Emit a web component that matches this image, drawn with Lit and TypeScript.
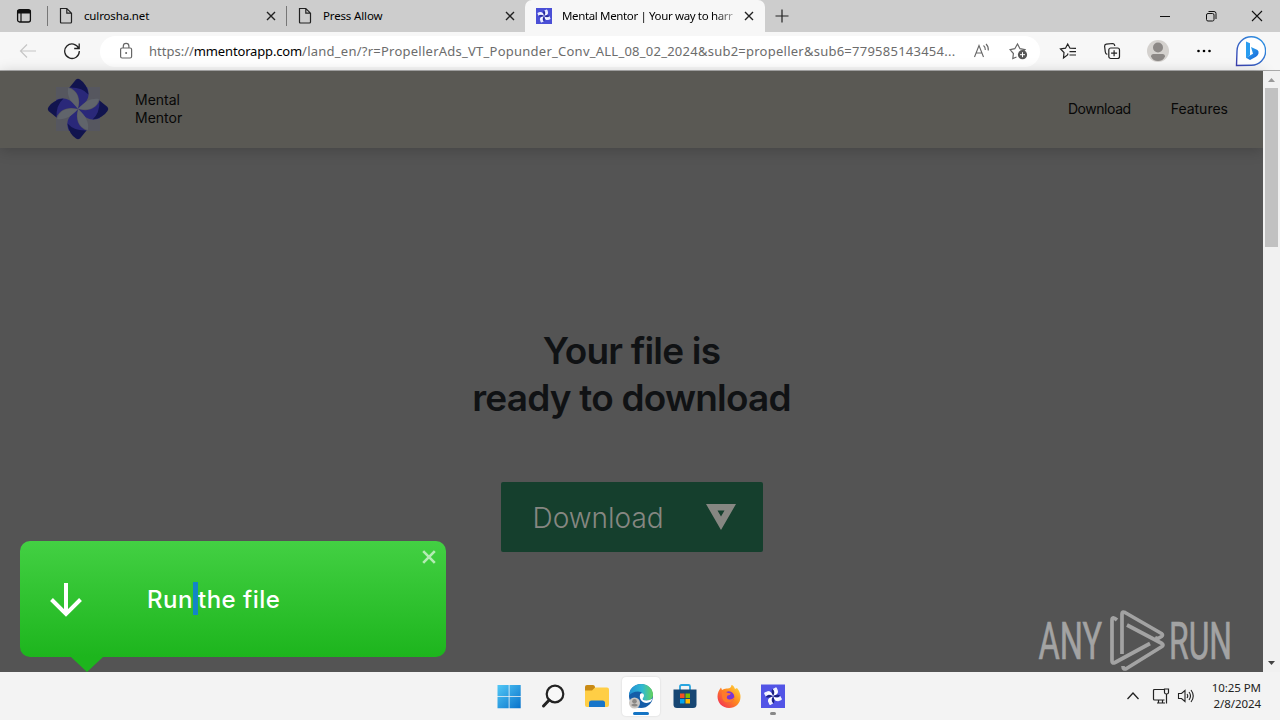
import { LitElement, html, css, svg } from "lit";
import { customElement } from "lit/decorators.js";

const pageIcon = html`<svg class="ic" width="14" height="18" viewBox="0 0 14 18"><path d="M1.5 1.5h6.3l4.700 4.700v8.800q0 1-1 1h-9q-1 0-1-1zM7.800 1.500v4.700h4.700" fill="none" stroke="#222" stroke-width="1.200"/></svg>`;
const closeIcon = html`<svg class="ic" width="12" height="12" viewBox="0 0 12 12"><path d="M2 2l8 8M10 2l-8 8" stroke="#222" stroke-width="1.400"/></svg>`;

const petals = [0, 90, 180, 270];

// Four-petal pinwheel drawn around the origin, one petal per quarter turn.
const wheel = (body: string, tip: string, shade: string) => svg`${petals.map(
  (a) => svg`<g transform="rotate(${a})">
    <path d="M0 0C-8-7-11-13-10-21Q3-18 0 0z" fill=${shade}/>
    <path d="M0 0C3-10 0-18-9-22L9-22C14-10 6-5 0 0z" fill=${body}/>
    <path d="M-8.500-21.500L-2-29.500Q0-31 2-29.500Q9-25 10.500-14.500Q4-22-8.500-21.500z" fill=${tip}/>
  </g>`
)}`;

@customElement("app-root")
export class AppRoot extends LitElement {
  static styles = css`
    :host { display: flex; flex-direction: column; width: 1280px; height: 720px; overflow: hidden; position: relative; font-family: "Noto Sans", "Open Sans", sans-serif; color: #111; }
    * { box-sizing: border-box; }
    svg { display: block; flex: none; }
    .tabs { height: 32px; background: #cdcdcd; display: flex; align-items: stretch; flex: none; }
    .cell { display: flex; align-items: center; justify-content: center; flex: none; }
    .actions { width: 47px; }
    .tab { display: flex; align-items: center; font-size: 11.5px; flex: none; white-space: nowrap; color: #000; }
    .tab .label { flex: 1; line-height: 20px; letter-spacing: -.15px; }
    .t1 { width: 238px; padding: 0 9px 0 11px; }
    .t1 .label, .t2 .label { margin-left: 11px; }
    .t2 { width: 238px; padding: 0 9px 0 11px; }
    .t3 { width: 240px; background: #f7f7f7; border-radius: 7px 7px 0 0; padding: 0 10px 0 11px; }
    .t3 .label { margin: 0 8px 0 10px; letter-spacing: -.36px; -webkit-mask-image: linear-gradient(90deg, #000 88%, rgba(0,0,0,.25)); mask-image: linear-gradient(90deg, #000 88%, rgba(0,0,0,.25)); }
    .sep { width: 1px; height: 20px; margin-top: 6px; background: #777; flex: none; }
    .plus { width: 34px; }
    .fill { flex: 1; }
    .w46 { width: 46px; }
    .bar { height: 39px; background: #f7f7f7; border-bottom: 1px solid #aaa; display: flex; align-items: center; padding: 0 6px; flex: none; }
    .w44 { width: 44px; }
    .w48 { width: 48px; }
    .pill { width: 940px; height: 31px; margin: 0 6px; background: #fff; border-radius: 16px; display: flex; align-items: center; padding: 0 12px 0 18px; flex: none; }
    .url { width: 815px; margin-left: 15px; font-size: 13px; line-height: 20px; color: #6c6c6c; white-space: nowrap; letter-spacing: .245px; }
    .url b { font-weight: 400; color: #000; letter-spacing: -.15px; }
    .url .scheme { letter-spacing: 0; }
    .pill .read { margin-left: 10px; }
    .pill .star { margin-left: 18px; }
    .view { flex: 1; display: flex; min-height: 0; }
    .site { width: 1263px; background: #545454; display: flex; flex-direction: column; font-family: "Inter", sans-serif; }
    .head { height: 77px; background: #5a5954; box-shadow: 0 2px 14px rgba(0,0,0,.2); display: flex; align-items: center; padding: 0 35px 2px 46px; font-size: 14px; line-height: 18px; color: #080808; flex: none; }
    .brand { margin-left: 25px; flex: 1; }
    .nav { display: flex; gap: 40px; }
    .nav .first { letter-spacing: -.45px; }
    .hero { display: flex; flex-direction: column; align-items: center; padding-top: 179px; }
    .title { margin: 0; font-size: 37px; line-height: 47px; font-weight: 600; letter-spacing: -.8px; color: #101214; text-align: center; white-space: nowrap; }
    .dl { width: 262px; height: 70px; margin-top: 61px; border-radius: 2px; background: #153f2d; display: flex; align-items: center; justify-content: space-between; padding: 2px 26px 0 32px; font-size: 28px; font-weight: 300; color: #868782; }
    .dl svg { margin-top: -2px; }
    .scroll { width: 17px; background: #f1f1f1; display: flex; flex-direction: column; align-items: center; }
    .thumb { width: 13px; height: 159px; background: #c1c1c1; }
    .arr { height: 17px; }
    .task { height: 48px; background: #f3f3f3; display: flex; align-items: center; flex: none; padding-left: 487px; }
    .app { width: 44px; height: 48px; flex: none; display: flex; flex-direction: column; align-items: center; padding-top: 11px; }
    .app.on { width: 38px; height: 39px; margin: 0 3px; padding-top: 6px; background: #fff; border-radius: 4px; box-shadow: 0 0 2px rgba(0,0,0,.15); }
    .line { width: 16px; height: 3px; border-radius: 2px; background: #1474c4; margin-top: 3px; flex: none; }
    .line.small { width: 6px; background: #888; }
    .tray { display: flex; align-items: center; padding-right: 19px; }
    .net { margin-left: 12px; }
    .vol { margin-left: 7px; }
    .clock { width: 66px; font-size: 11.5px; line-height: 16px; color: #222; text-align: right; white-space: nowrap; letter-spacing: -.05px; }
    .pop { position: absolute; left: 20px; top: 541px; width: 426px; height: 116px; border-radius: 10px; background: linear-gradient(#43d043, #1db51d); display: flex; align-items: center; padding-left: 30px; font-family: "Inter", sans-serif; }
    .down { margin-top: 2px; }
    .msg { margin-left: 65px; font-size: 24px; letter-spacing: .5px; line-height: 33px; font-weight: 500; color: #fff; white-space: pre; flex: 1; display: flex; }
    .sel { width: 5px; height: 33px; margin-top: -1px; background: #1385c7; }
    .x { align-self: flex-start; margin: 9px 10px 0 0; }
    .tail { position: absolute; left: 51px; top: 116px; }
    .mark { position: absolute; left: 1030px; top: 605px; font-family: "Roboto", sans-serif; }
  `;

  render() {
    return html`
      <div class="tabs">
        <div class="cell actions"><svg width="16" height="16" viewBox="0 0 16 16"><rect x="1.600" y="1.600" width="12.800" height="12.400" rx="2" fill="none" stroke="#111" stroke-width="1.300"/><path d="M1.500 2h13v3.500h-13z" fill="#111"/><path d="M5 5v9" stroke="#111" stroke-width="1.200"/></svg></div>
        <div class="sep"></div>
        <div class="tab t1">${pageIcon}<span class="label">culrosha.net</span>${closeIcon}</div>
        <div class="sep"></div>
        <div class="tab t2">${pageIcon}<span class="label">Press Allow</span>${closeIcon}</div>
        <div class="tab t3">
          <svg width="16" height="16" viewBox="-34 -34 68 68"><rect x="-34" y="-34" width="68" height="68" fill="#4a4fd6"/><g transform="rotate(25)">${wheel("#f4f6ff", "#e8ecff", "#262a9a")}</g></svg>
          <span class="label">Mental Mentor | Your way to harr</span>${closeIcon}
        </div>
        <div class="cell plus"><svg width="14" height="14" viewBox="0 0 14 14"><path d="M7 .5v13M.5 7h13" stroke="#222" stroke-width="1.200"/></svg></div>
        <div class="fill"></div>
        <div class="cell w46"><svg width="10" height="10" viewBox="0 0 10 10"><path d="M0 5.500h10" stroke="#111"/></svg></div>
        <div class="cell w46"><svg width="12" height="12" viewBox="0 0 12 12"><rect x="1.500" y="3.500" width="7.500" height="7.500" rx="1.500" fill="none" stroke="#111"/><path d="M3.500 1.500H9q2 0 2 2V9" fill="none" stroke="#111"/></svg></div>
        <div class="cell w46"><svg width="12" height="12" viewBox="0 0 12 12"><path d="M1 1l10 10M11 1L1 11" stroke="#111" stroke-width="1.100"/></svg></div>
      </div>

      <div class="bar">
        <div class="cell w44"><svg width="18" height="16" viewBox="0 0 18 16"><path d="M8 1.500L1.500 8 8 14.500M1.500 8H17" fill="none" stroke="#c6c6c6" stroke-width="1.200"/></svg></div>
        <div class="cell w44"><svg width="18" height="18" viewBox="0 0 18 18"><path d="M15.800 6.500A7.300 7.300 0 1 0 16.300 9M16.200 1.500v5h-5" fill="none" stroke="#222" stroke-width="1.300"/></svg></div>
        <div class="pill">
          <svg width="16" height="18" viewBox="0 0 16 18"><rect x="2.600" y="6" width="11" height="10" rx="1.500" fill="none" stroke="#666" stroke-width="1.200"/><path d="M5.300 6V4.200a2.800 2.800 0 0 1 5.600 0V6" fill="none" stroke="#666" stroke-width="1.200"/><circle cx="8.100" cy="11" r="1" fill="#666"/></svg>
          <div class="url"><span class="scheme">https://</span><b>mmentorapp.com</b>/land_en/?r=PropellerAds_VT_Popunder_Conv_ALL_08_02_2024&amp;sub2=propeller&amp;sub6=779585143454...</div>
          <svg class="read" width="18" height="16" viewBox="0 0 18 16"><path d="M1.500 14L6 2.500 10.500 14M3 10h6M10.500 2.500q2 1.500 1.800 4.500M13 1q2.700 2.500 2.300 6.500" fill="none" stroke="#666" stroke-width="1.100"/></svg>
          <svg class="star" width="19" height="18" viewBox="0 0 19 18"><path d="M7.500 15l-3.700 1.500.6-5L1 7.600l4.800-.9L8.500 2 11 6.700l5 .9-2 2" fill="none" stroke="#666" stroke-width="1.200"/><circle cx="13.500" cy="12.700" r="4.600" fill="#555"/><path d="M13.500 10.200v5M11 12.700h5" stroke="#fff"/></svg>
        </div>
        <div class="cell w44"><svg width="18" height="18" viewBox="0 0 18 18"><path d="M9 11.500l-.500 1.500-4 3 .5-5.500L1.500 7l5-.800L8.700 2l2.300 4.200 6 .2M10.500 9.700H17M10.500 13H17" fill="none" stroke="#222" stroke-width="1.200"/></svg></div>
        <div class="cell w44"><svg width="18" height="18" viewBox="0 0 18 18"><path d="M4.300 12.300Q2.500 12 2.300 10L1.600 4.200q0-1.700 1.700-2L9.500 1.500q2 0 2.300 2.500" fill="none" stroke="#222" stroke-width="1.200"/><rect x="5.800" y="6" width="10.700" height="10.500" rx="2" fill="#f7f7f7" stroke="#222" stroke-width="1.200"/><path d="M11.100 8.200v6M8.100 11.200h6" stroke="#222" stroke-width="1.200"/></svg></div>
        <div class="cell w48"><svg width="22" height="22" viewBox="0 0 22 22"><circle cx="11" cy="11" r="11" fill="#d4d1ce"/><circle cx="11" cy="7.500" r="5" fill="#8c8886"/><path d="M4 16.500q0-2.500 2.500-2.500h9q2.500 0 2.500 2.500Q16 21 11 21T4 16.500z" fill="#8c8886"/></svg></div>
        <div class="cell w44"><svg width="16" height="4" viewBox="0 0 16 4"><circle cx="2.500" cy="2" r="1.300"/><circle cx="8" cy="2" r="1.300"/><circle cx="13.500" cy="2" r="1.300"/></svg></div>
        <div class="cell w48"><svg width="32" height="32" viewBox="0 0 32 32">
          <defs><linearGradient id="bg" x1="0" y1="1" x2="1" y2="0"><stop offset="0" stop-color="#3c3fae"/><stop offset="1" stop-color="#2c9ae8"/></linearGradient><linearGradient id="bb" x1="0" y1="0" x2="1" y2="1"><stop offset="0" stop-color="#35b2f2"/><stop offset="1" stop-color="#1560d8"/></linearGradient></defs>
          <path d="M2.500 30.500l.5-14.500A14.300 14.300 0 1 1 17.500 30.300z" fill="#fff" stroke="url(#bg)" stroke-width="1.400"/>
          <path d="M12 6.500l4 1.700v12l-4 3z" fill="#2a9df0"/><path d="M17 12l6.500 3q1.500 1 1 3.500-.5 2-2.500 3.300L16 25l-4-2.300 7-4z" fill="url(#bb)"/></svg></div>
      </div>

      <div class="view">
        <div class="site">
          <div class="head">
            <svg width="64" height="64" viewBox="-32 -32 64 64"><path d="M-22-22h44v44h-44z" fill="#51556a" opacity=".5"/>${wheel("#2a2879", "#11144e", "#60646b")}</svg>
            <div class="brand">Mental<br>Mentor</div>
            <div class="nav"><span class="first">Download</span><span>Features</span></div>
          </div>
          <div class="hero">
            <h1 class="title">Your file is<br>ready to download</h1>
            <div class="dl"><span>Download</span><svg width="32" height="28" viewBox="0 0 32 28"><path fill-rule="evenodd" d="M1 1h30L16 27zM12.500 7.500L16 13.500 19.500 7.500z" fill="#868782"/></svg></div>
          </div>
        </div>
        <div class="scroll">
          <svg class="arr" width="17" height="17" viewBox="0 0 17 17"><path d="M5 11h7L8.500 7z" fill="#999"/></svg>
          <div class="thumb"></div><div class="fill"></div>
          <svg class="arr" width="17" height="17" viewBox="0 0 17 17"><path d="M5 6h7L8.500 10z" fill="#444"/></svg>
        </div>
      </div>

      <div class="task">
        <div class="app"><svg width="24" height="26" viewBox="0 0 24 26"><defs><linearGradient id="win" x1="0" y1="0" x2="1" y2="1"><stop offset="0" stop-color="#52c8f6"/><stop offset="1" stop-color="#0872cb"/></linearGradient></defs><path d="M.5 2h11.200v11.200H.5zM12.500 2h11.200v11.200H12.500zM.5 14h11.200v11.200H.5zM12.500 14h11.200v11.200H12.500z" fill="url(#win)"/></svg></div>
        <div class="app"><svg width="24" height="26" viewBox="0 0 24 26"><circle cx="14" cy="11" r="8.300" fill="#f8f8f8" stroke="#222" stroke-width="2.200"/><path d="M8.200 17L2.500 23" stroke="#222" stroke-width="3" stroke-linecap="round"/></svg></div>
        <div class="app"><svg width="26" height="26" viewBox="0 0 26 26"><path d="M1 4q0-2 2-2h6q1.500 0 2 1.500V8H1z" fill="#c98a14"/><path d="M1 7.500h7l3-3h12q2 0 2 2V22q0 2-2 2H3q-2 0-2-2z" fill="#ffce45"/><path d="M5 24v-4q0-2.500 2.500-2.500h11Q21 17.500 21 20v4z" fill="#1775c9"/></svg></div>
        <div class="app on"><svg width="26" height="26" viewBox="0 0 26 26"><defs><linearGradient id="e1" x1="0" y1="0" x2="1" y2="0"><stop offset="0" stop-color="#218fd4"/><stop offset=".55" stop-color="#30b9d2"/><stop offset="1" stop-color="#65d35b"/></linearGradient></defs><circle cx="13" cy="13" r="12" fill="#155da8"/><path d="M1 12.500C1.500 5 7 1 13 1c7 0 12 5 12 10.500 0 4-3 6-6.500 6-3 0-4.500-1-3.500-2.500 2-3-1-6.500-5-6.500-4 0-7.500 2-9 4z" fill="url(#e1)"/><path d="M15 15q-1.500 2.500 3.500 2.500 3 0 6-2l-1.500 3q-4 2.500-8 .5-4-3-3-7.500 1-2 3-1 2 2 0 4.500z" fill="#fff"/><circle cx="6.500" cy="20" r="5.500" fill="#c9c5c1"/><circle cx="6.500" cy="18.300" r="2.300" fill="#8a8784"/><path d="M3 22q3.500-3 7 0-3 3-7 0z" fill="#8a8784"/></svg><div class="line"></div></div>
        <div class="app"><svg width="24" height="26" viewBox="0 0 24 26"><path d="M7 8V3.500Q7 2 8.500 2h7Q17 2 17 3.500V8" fill="none" stroke="#2aa5df" stroke-width="1.800"/><path d="M.5 6.500h23v15q0 3.500-3.500 3.500H4Q.5 25 .5 21.500z" fill="#174673"/><path d="M7 10.500h4.500V15H7z" fill="#f25022"/><path d="M12.500 10.500H17V15h-4.500z" fill="#7fba00"/><path d="M7 16h4.500v4.500H7z" fill="#00a4ef"/><path d="M12.500 16H17v4.500h-4.500z" fill="#ffb900"/></svg></div>
        <div class="app"><svg width="24" height="26" viewBox="0 0 24 26"><defs><linearGradient id="ff" x1="1" y1="0" x2="0" y2="1"><stop offset="0" stop-color="#ffe340"/><stop offset=".45" stop-color="#ff8a1e"/><stop offset="1" stop-color="#f0215f"/></linearGradient></defs><path d="M12 25C5.500 25 .5 20 .5 13.500.5 9.500 2 7 4 4.500L5 7q2-1.500 4.500-1.500Q14 6 14.500 2q2 0 3.500 4l2-1q3.500 4 3.500 9C23.500 20.500 18.500 25 12 25z" fill="url(#ff)"/><circle cx="11.800" cy="13.800" r="5.500" fill="#7a35d4"/><path d="M5 9q3-1 6 1l3 .5q-1 2-3.500 2-2 3 1.500 4 3 .5 5.500-2.500-1 5.500-6 5.500-6 0-6.500-6z" fill="#ff7a2a"/></svg></div>
        <div class="app"><svg width="24" height="26" viewBox="0 0 24 26"><path d="M0 1.500h24V25H0z" fill="#5254e6"/><g transform="translate(12 13.200) scale(.31) rotate(20)">${wheel("#fff", "#f1f3ff", "#1d2180")}</g></svg><div class="line small"></div></div>
        <div class="fill"></div>
        <div class="tray">
          <svg width="14" height="10" viewBox="0 0 14 10"><path d="M1.500 8L7 2l5.500 6" fill="none" stroke="#222" stroke-width="1.300"/></svg>
          <svg class="net" width="18" height="18" viewBox="0 0 18 18"><path d="M12 2.500H2.500q-1 0-1 1V12q0 1 1 1h10M5 16h8M6.500 13v3M10.500 13v3M14.500 7v9.500" fill="none" stroke="#222" stroke-width="1.200"/><path d="M12.500 2h4v3.500q0 1.500-2 1.500t-2-1.500z" fill="none" stroke="#222" stroke-width="1.200"/></svg>
          <svg class="vol" width="18" height="16" viewBox="0 0 18 16"><path d="M1.500 5.500h3L8 2.500v11L4.500 10.500h-3zM10 6q1.500 2 0 4M12 4q3 4 0 8M14 2q4.500 6 0 12" fill="none" stroke="#222" stroke-width="1.100"/></svg>
          <div class="clock">10:25 PM<br>2/8/2024</div>
        </div>
      </div>

      <div class="pop">
        <svg class="down" width="32" height="34" viewBox="0 0 32 34"><path d="M16 0v30M1.500 16.500L16 31l14.500-14.500" fill="none" stroke="#fff" stroke-width="4"/></svg>
        <div class="msg"><span>Run</span><span class="sel"> </span><span>the file</span></div>
        <svg class="x" width="14" height="14" viewBox="0 0 14 14"><path d="M1.200 1.200l11.600 11.600M12.800 1.200L1.200 12.800" stroke="#b4ecb4" stroke-width="2.600"/></svg>
        <svg class="tail" width="32" height="15" viewBox="0 0 32 15"><path d="M0 0h32L16 15z" fill="#1db51d"/></svg>
      </div>

      <svg class="mark" width="230" height="72" viewBox="0 0 230 72" fill="none" stroke="#a3a3a3">
        <g fill="#a3a3a3" stroke-width=".7" font-size="52" font-weight="400">
          <text x="8.500" y="54" textLength="63.500" lengthAdjust="spacingAndGlyphs">ANY</text>
          <text x="139" y="54" textLength="63" lengthAdjust="spacingAndGlyphs">RUN</text>
        </g>
        <g stroke-width="3.700" stroke-linejoin="round">
          <path d="M87 15Q82 10.500 82 15.500V56q0 3 3 1.500L120 38.500"/>
          <path d="M92 49V9q0-3 3-1.500L131.500 28.500q2 1.500 0 3l-2.500 1.500q-2 .8-4-.3"/>
          <path d="M97 20l35 18.500q2 1.500 0 3L96.500 63.500q-3.500 1.500-3.500-2.500"/>
        </g>
      </svg>
    `;
  }
}
